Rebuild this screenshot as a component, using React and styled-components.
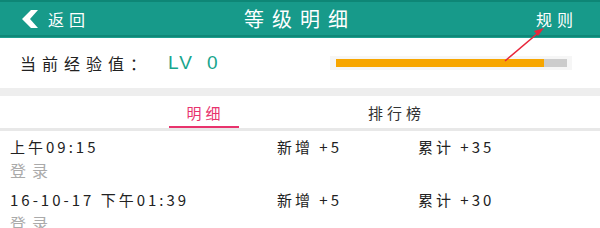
import React, { useState } from 'react';
import styled, { createGlobalStyle } from 'styled-components';

const GlobalStyle = createGlobalStyle`
  html, body {
    margin: 0;
    padding: 0;
    background: #ffffff;
  }
  body {
    font-family: "Noto Sans CJK SC", "Noto Sans", "Liberation Sans", sans-serif;
    width: 600px;
    height: 228px;
    overflow: hidden;
  }
`;

const RECORDS = [
  { time: '上午09:15', add: '新增 +5', total: '累计 +35', action: '登录' },
  { time: '16-10-17 下午01:39', add: '新增 +5', total: '累计 +30', action: '登录' },
];

const TABS = ['明细', '排行榜'];

function App() {
  const [active, setActive] = useState(0);
  const level = 0;
  const progress = 90;

  return (
    <Page>
      <GlobalStyle />
      <Header>
        <Back>
          <svg width="17" height="18" viewBox="0 0 17 18">
            <polygon points="16,0 8,9 16,18 9,18 0,9 9,0" fill="#ffffff" />
          </svg>
          <span>返回</span>
        </Back>
        <Title>等级明细</Title>
        <Rule>规则</Rule>
        <Arrow width="60" height="40" viewBox="0 0 60 40">
          <line x1="5" y1="37" x2="38" y2="9" stroke="#e8263a" strokeWidth="1.6" />
          <polygon points="44,4 34,7 38,12" fill="#e8263a" />
        </Arrow>
      </Header>
      <ExpRow>
        <ExpLabel>当前经验值：</ExpLabel>
        <Level>LV {level}</Level>
        <Track>
          <Fill style={{ width: `${progress}%` }} />
        </Track>
      </ExpRow>
      <Gap />
      <Tabs>
        {TABS.map((tab, index) => (
          <Tab key={tab} active={index === active} onClick={() => setActive(index)}>
            {tab}
          </Tab>
        ))}
      </Tabs>
      <Divider />
      <List>
        {RECORDS.map((item, index) => (
          <Record key={index}>
            <RecordMain>
              <Time>{item.time}</Time>
              <Add>{item.add}</Add>
              <Total>{item.total}</Total>
            </RecordMain>
            <Action>{item.action}</Action>
          </Record>
        ))}
      </List>
    </Page>
  );
}
export default App;

const Page = styled.div`
  width: 600px;
  height: 228px;
  overflow: hidden;
  background: #ffffff;
`;
const Header = styled.div`
  position: relative;
  height: 33px;
  display: flex;
  align-items: center;
  padding: 0 22px 0 22px;
  background: #179a8a;
  border-top: 2px solid #0e8676;
  border-bottom: 2px solid #0f8878;
  box-shadow: 0 1px 0 #1d9e8e;
  color: #ffffff;
`;
const Back = styled.div`
  display: flex;
  align-items: center;
  gap: 9px;
  width: 140px;
  font-size: 16px;
  letter-spacing: 5px;
  & svg {
    display: block;
  }
`;
const Title = styled.div`
  flex: 1;
  text-align: center;
  font-size: 20px;
  letter-spacing: 8px;
  padding-left: 8px;
  margin-right: 8px;
`;
const Rule = styled.div`
  width: 140px;
  text-align: right;
  font-size: 16px;
  letter-spacing: 5px;
`;
const Arrow = styled.svg`
  position: absolute;
  left: 500px;
  top: 22px;
  overflow: visible;
`;
const ExpRow = styled.div`
  height: 51px;
  display: flex;
  align-items: center;
  padding: 0 28px 0 20px;
`;
const ExpLabel = styled.div`
  width: 148px;
  font-size: 16px;
  letter-spacing: 6px;
  color: #222222;
`;
const Level = styled.div`
  font-size: 19px;
  letter-spacing: 2px;
  word-spacing: 6px;
  color: #17a58c;
  font-family: "Liberation Sans", sans-serif;
`;
const Track = styled.div`
  margin-left: auto;
  width: 231px;
  height: 8px;
  background: #cccccc;
  border: 3px solid #f6f6f6;
  border-left-width: 6px;
  border-right-width: 5px;
`;
const Fill = styled.div`
  height: 100%;
  background: #f7a600;
`;
const Gap = styled.div`
  height: 8px;
  background: #eeeeee;
`;
const Tabs = styled.div`
  height: 32px;
  display: flex;
  justify-content: center;
  gap: 121px;
  padding-right: 2px;
  background: #ffffff;
`;
const Tab = styled.div`
  width: 70px;
  display: flex;
  align-items: center;
  justify-content: center;
  font-size: 15px;
  letter-spacing: 4px;
  padding-left: 4px;
  box-sizing: border-box;
  cursor: pointer;
  white-space: nowrap;
  color: ${props => (props.active ? '#e8336d' : '#333333')};
  border-bottom: 2px solid ${props => (props.active ? '#e8336d' : 'transparent')};
  padding-top: 2px;
`;
const Divider = styled.div`
  height: 3px;
  background: #e8e8e8;
`;
const List = styled.div`
  display: flex;
  flex-direction: column;
`;
const Record = styled.div`
  height: 53px;
  padding: 5px 10px 0;
  box-sizing: border-box;
`;
const RecordMain = styled.div`
  display: flex;
  align-items: center;
  height: 21px;
  font-size: 15px;
  letter-spacing: 3px;
  color: #222222;
`;
const Time = styled.div`
  width: 267px;
`;
const Add = styled.div`
  width: 141px;
`;
const Total = styled.div``;
const Action = styled.div`
  margin-top: 1px;
  font-size: 16px;
  letter-spacing: 6px;
  color: #aaaaaa;
`;
